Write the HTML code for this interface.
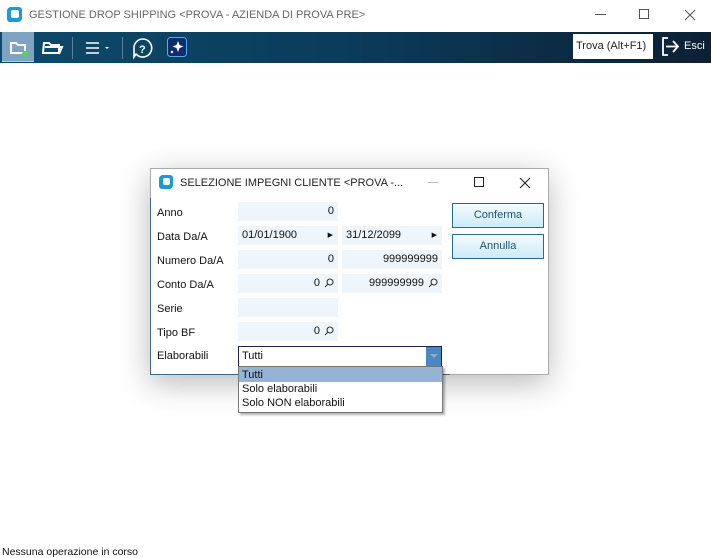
<!DOCTYPE html>
<html><head><meta charset="utf-8"><style>
*{margin:0;padding:0;box-sizing:border-box}
body{width:711px;height:558px;background:#fff;position:relative;overflow:hidden;font-family:"Liberation Sans",sans-serif;font-size:11px;color:#111}
.a{position:absolute}
.tb{left:0;top:32px;width:711px;height:31px;background:linear-gradient(90deg,#0c4a6a 0%,#0b3b5a 50%,#0c2034 100%)}
.f{position:absolute;background:#eef6fc;height:19px;line-height:19px;padding:0 4px}
.r{text-align:right}
.lbl{position:absolute;left:157px;line-height:19px;top:0}
.btn{position:absolute;left:452px;width:92px;height:25px;border:1px solid #2a6a8a;background:linear-gradient(#f4fbff,#cdeaf8);color:#1f5272;text-align:center;line-height:23px;font-size:11px}
</style></head><body>
<div class="a" style="left:0;top:0;width:711px;height:32px;background:#fff"></div>
<div class="a" style="left:7px;top:7px;width:15px;height:15px;background:#1d9ad6;border-radius:4px 3px 4px 3px"></div>
<div class="a" style="left:11px;top:10px;width:8px;height:8px;background:#fff;border-radius:2px"></div>
<div class="a" style="left:29px;top:9px;font-size:11px;color:#666">GESTIONE DROP SHIPPING &lt;PROVA - AZIENDA DI PROVA PRE&gt;</div>
<div class="a" style="left:595px;top:14px;width:11px;height:1px;background:#555"></div>
<div class="a" style="left:639px;top:9px;width:10px;height:10px;border:1px solid #555"></div>
<svg class="a" style="left:684px;top:9px" width="12" height="12"><path d="M1 1l10 10M11 1L1 11" stroke="#555" stroke-width="1"/></svg>
<div class="a tb"></div>
<div class="a" style="left:2px;top:32px;width:32px;height:30px;background:#7fa3c4;border-bottom:1px solid #d8d060"></div>
<svg class="a" style="left:0;top:32px" width="200" height="31">
<path d="M11 11h5l2 2h7v8H11z" fill="none" stroke="#fff" stroke-width="2"/>
<circle cx="25" cy="22" r="3" fill="#5cd05c"/>
<path d="M44 11h5l2 2h8v8H43z M45 15h17l-3 7" fill="none" stroke="#fff" stroke-width="2"/>
<line x1="72.5" y1="5" x2="72.5" y2="27" stroke="#5a7f99"/>
<path d="M86 11h13M86 16h13M86 21h13" stroke="#fff" stroke-width="1.6"/>
<path d="M105 15h4l-2 2z" fill="#fff"/>
<line x1="122.5" y1="5" x2="122.5" y2="27" stroke="#5a7f99"/>
<path d="M143 7a9 9 0 1 1 -7 15l-2 3v-8a9 9 0 0 1 9 -10z" fill="none" stroke="#fff" stroke-width="1.6"/>
<text x="139" y="21" fill="#fff" font-size="11" font-family="Liberation Sans" font-weight="bold">?</text>
<rect x="167.5" y="5.5" width="19" height="19" rx="3" fill="#0e2c6e" stroke="#5aa8e8"/>
<path d="M178 9l1.5 4 4 1.5-4 1.5-1.5 4-1.5-4-4-1.5 4-1.5z" fill="#fff"/>
<circle cx="172" cy="20" r="1.2" fill="#fff"/>
</svg>
<div class="a" style="left:573px;top:34px;width:80px;height:25px;background:#fff;font-size:11px;line-height:25px;padding-left:3px;color:#222">Trova (Alt+F1)</div>
<svg class="a" style="left:660px;top:36px" width="22" height="22"><path d="M8 2H3v17h5" fill="none" stroke="#fff" stroke-width="1.8"/><path d="M6 10.5h12M13 5l5 5.5-5 5.5" fill="none" stroke="#fff" stroke-width="1.8"/></svg>
<div class="a" style="left:684px;top:40px;font-size:11px;color:#fff">Esci</div>
<div class="a" style="left:150px;top:168px;width:398px;height:207px;box-shadow:0 8px 30px rgba(0,0,0,0.28)"></div>
<div class="a" style="left:150px;top:168px;width:399px;height:207px;background:#fff;border:1px solid #aaa"></div>
<div class="a" style="left:150px;top:198px;width:300px;height:177px;border-left:1px solid #3a6a8a;border-bottom:1px solid #3a6a8a"></div>
<div class="a" style="left:159px;top:175px;width:14px;height:14px;background:#1d9ad6;border-radius:4px 3px 4px 3px"></div>
<div class="a" style="left:163px;top:178px;width:7px;height:7px;background:#fff;border-radius:2px"></div>
<div class="a" style="left:180px;top:177px;font-size:11px;color:#222">SELEZIONE IMPEGNI CLIENTE &lt;PROVA -...</div>
<div class="a" style="left:428px;top:182px;width:10px;height:1px;background:#bbb"></div>
<div class="a" style="left:474px;top:177px;width:10px;height:10px;border:1px solid #222"></div>
<svg class="a" style="left:519px;top:177px" width="12" height="12"><path d="M1 1l10 10M11 1L1 11" stroke="#222" stroke-width="1.1"/></svg>
<div class="lbl" style="top:204px">Anno</div>
<div class="lbl" style="top:228px">Data Da/A</div>
<div class="lbl" style="top:252px">Numero Da/A</div>
<div class="lbl" style="top:276px">Conto Da/A</div>
<div class="lbl" style="top:300px">Serie</div>
<div class="lbl" style="top:324px">Tipo BF</div>
<div class="lbl" style="top:347px">Elaborabili</div>
<div class="f r" style="left:238px;top:202px;width:100px">0</div>
<div class="f" style="left:238px;top:226px;width:100px">01/01/1900<span style="position:absolute;right:5px;font-size:7px">▶</span></div>
<div class="f" style="left:342px;top:226px;width:100px">31/12/2099<span style="position:absolute;right:5px;font-size:7px">▶</span></div>
<div class="f r" style="left:238px;top:250px;width:100px">0</div>
<div class="f r" style="left:342px;top:250px;width:100px">999999999</div>
<div class="f r" style="left:238px;top:274px;width:100px;padding-right:18px">0</div>
<div class="f r" style="left:342px;top:274px;width:100px;padding-right:18px">999999999</div>
<div class="f" style="left:238px;top:298px;width:100px"></div>
<div class="f r" style="left:238px;top:322px;width:100px;padding-right:18px">0</div>
<svg class="a" style="left:0;top:0" width="711" height="558">
<g fill="none" stroke="#333" stroke-width="1.1">
<circle cx="330" cy="282" r="3"/><path d="M328 284l-3 3"/>
<circle cx="434" cy="282" r="3"/><path d="M432 284l-3 3"/>
<circle cx="330" cy="330" r="3"/><path d="M328 332l-3 3"/>
</g></svg>
<div class="a" style="left:238px;top:346px;width:204px;height:21px;border:1px solid #224;background:#fff;padding-left:3px;line-height:19px">Tutti</div>
<div class="a" style="left:426px;top:347px;width:15px;height:19px;background:#4a86bf"></div>
<div class="a" style="left:430px;top:354px;width:0;height:0;border-left:4px solid transparent;border-right:4px solid transparent;border-top:4px solid #9ab"></div>
<div class="btn" style="top:203px">Conferma</div>
<div class="btn" style="top:234px">Annulla</div>
<div class="a" style="left:238px;top:366px;width:205px;height:47px;background:#fff;border:1px solid #777;box-shadow:2px 2px 2px rgba(0,0,0,0.3)"></div>
<div class="a" style="left:239px;top:367px;width:203px;height:15px;background:#97b3d3"></div>
<div class="a" style="left:242px;top:368px;line-height:14px">Tutti<br>Solo elaborabili<br>Solo NON elaborabili</div>
<div class="a" style="left:2px;top:546px;font-size:10.5px">Nessuna operazione in corso</div>
</body></html>
